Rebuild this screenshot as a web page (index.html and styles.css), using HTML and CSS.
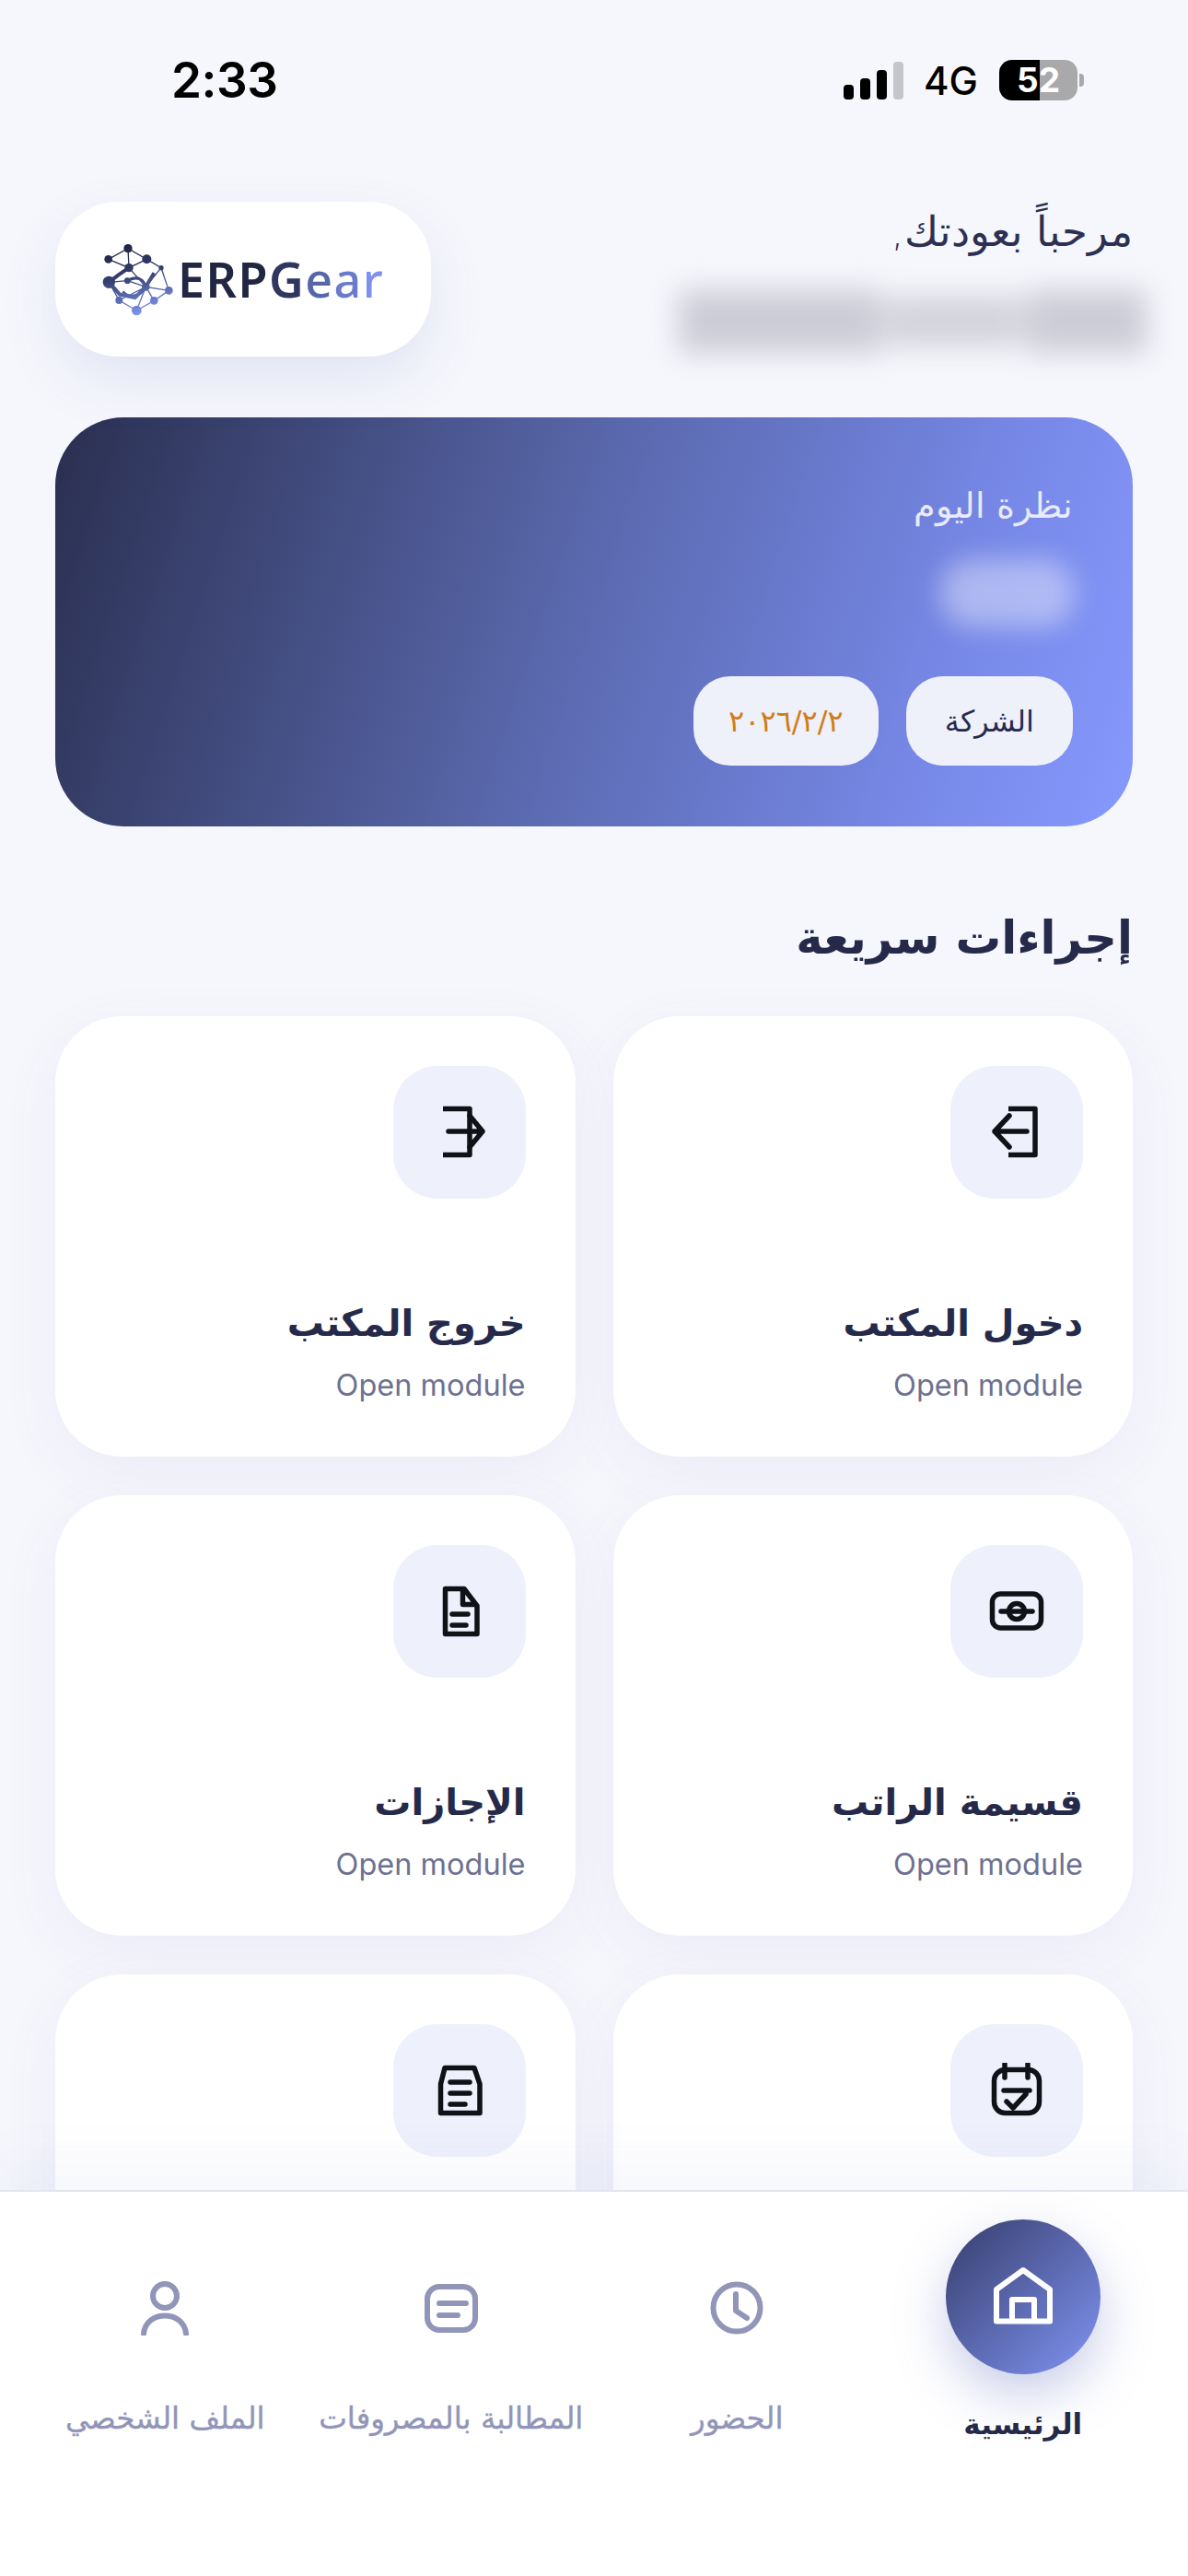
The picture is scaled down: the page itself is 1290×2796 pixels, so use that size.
FILE: index.html
```html
<!DOCTYPE html>
<html lang="ar" dir="rtl">
<head>
<meta charset="utf-8">
<title>ERPGear</title>
<link rel="stylesheet" href="styles.css">
</head>
<body>
<div class="screen">
  <div class="status" dir="ltr">
    <span class="time">2:33</span>
    <div class="status-right">
      <div class="signal"><i class="b1"></i><i class="b2"></i><i class="b3"></i><i class="b4"></i></div>
      <span class="net">4G</span>
      <div class="battery"><span class="batt-body">52</span><i class="batt-nub"></i></div>
    </div>
  </div>

  <header class="header">
    <div class="greet">
      <p class="hello">مرحباً بعودتك,</p>
      <div class="name-blur"><i></i><i></i><i></i></div>
    </div>
    <div class="logo" dir="ltr">
      <svg class="logo-mark" viewBox="180 65 240 240" aria-hidden="true">
        <defs>
          <linearGradient id="lg" gradientUnits="userSpaceOnUse" x1="250" y1="70" x2="310" y2="300">
            <stop offset="0" stop-color="#1f2340"/><stop offset=".45" stop-color="#35406f"/><stop offset="1" stop-color="#7f95f0"/>
          </linearGradient>
        </defs>
        <g fill="none" stroke="url(#lg)" stroke-width="4">
          <path d="M203 120L267 85L328 120L270 148L203 120M267 85L270 148M328 120L375 148L400 222L325 210L270 148M375 148L325 210M205 195L270 148M205 195L238 254L295 287L352 255L400 222M238 254L325 210L352 255L295 287L325 210M265 190L325 210M205 195L265 190"/>
          <path stroke-width="12" d="M270 148L235 172L205 195L240 235L290 245L325 210L352 165"/>
          <path stroke-width="9" d="M265 190C300 170 320 190 325 210M250 225C270 250 310 240 325 210"/>
        </g>
        <g fill="url(#lg)">
          <circle cx="267" cy="85" r="14"/><circle cx="203" cy="120" r="13"/><circle cx="328" cy="120" r="15"/>
          <circle cx="270" cy="148" r="14"/><circle cx="375" cy="148" r="8"/><circle cx="205" cy="195" r="20"/>
          <circle cx="265" cy="190" r="10"/><circle cx="325" cy="210" r="13"/><circle cx="400" cy="222" r="13"/>
          <circle cx="238" cy="254" r="12"/><circle cx="352" cy="255" r="13"/><circle cx="295" cy="287" r="16"/>
        </g>
      </svg>
      <span class="logo-text"><b class="c1">ERP</b><b class="c2">G</b><b class="c3">e</b><b class="c4">a</b><b class="c5">r</b></span>
    </div>
  </header>

  <section class="hero">
    <p class="hero-title">نظرة اليوم</p>
    <div class="hero-blur"></div>
    <div class="chips">
      <span class="chip">الشركة</span>
      <span class="chip chip-date">٢٠٢٦/٢/٢</span>
    </div>
  </section>

  <h2 class="section-title">إجراءات سريعة</h2>

  <div class="grid">
    <article class="card">
      <div class="icon-box"><svg class="ic" viewBox="0 0 60 60"><path d="M21 4.500H50V54.500H21"/><path class="rd" d="M41 29H6M22 12L6 29L22 46"/></svg></div>
      <h3 class="card-title">دخول المكتب</h3>
      <p class="card-sub">Open module</p>
    </article>
    <article class="card">
      <div class="icon-box"><svg class="ic" viewBox="0 0 60 60"><path d="M12 4.500H41V54.500H12"/><path class="rd" d="M18 29H55M41 12L55 29L41 46"/></svg></div>
      <h3 class="card-title">خروج المكتب</h3>
      <p class="card-sub">Open module</p>
    </article>
    <article class="card">
      <div class="icon-box"><svg class="ic" viewBox="0 0 60 60"><rect x="3.500" y="11" width="53" height="37" rx="9"/><path class="rd" d="M13 30H47"/><circle cx="30" cy="30" r="8.500"/></svg></div>
      <h3 class="card-title">قسيمة الراتب</h3>
      <p class="card-sub">Open module</p>
    </article>
    <article class="card">
      <div class="icon-box"><svg class="ic" viewBox="0 0 60 60"><path d="M14.500 5.500H35L49 24V54.500H14.500ZM33.500 6V22.500H48"/><path class="rd" d="M22 33H39M22 45H37"/></svg></div>
      <h3 class="card-title">الإجازات</h3>
      <p class="card-sub">Open module</p>
    </article>
    <article class="card">
      <div class="icon-box"><svg class="ic" viewBox="0 0 60 60"><rect x="5.500" y="7.500" width="49" height="47" rx="12"/><path class="rd" d="M17 1V16M42 1V16M16 30H44M19 42L26 49L40 34"/></svg></div>
    </article>
    <article class="card">
      <div class="icon-box"><svg class="ic" viewBox="0 0 60 60"><path d="M14 5.500H46L52 23V54.500H9.500V23Z"/><path class="rd" d="M20 21H41M20 33H41M20 45H36"/></svg></div>
    </article>
  </div>

  <nav class="nav">
    <div class="nav-item active">
      <div class="nav-home"><svg class="home-ic" viewBox="0 0 66 66"><path d="M4 59.500V25L33 4L62 25V59.500ZM21 59V36H45V59"/></svg></div>
      <span class="nav-label">الرئيسية</span>
    </div>
    <div class="nav-item">
      <svg class="nav-ic" viewBox="0 0 60 60"><circle cx="30" cy="30" r="25.500"/><path d="M29 15V33L41 41"/></svg>
      <span class="nav-label">الحضور</span>
    </div>
    <div class="nav-item">
      <svg class="nav-ic" viewBox="0 0 60 60"><rect x="4" y="7" width="52" height="47" rx="13"/><path d="M17 25H46M17 38H37"/></svg>
      <span class="nav-label">المطالبة بالمصروفات</span>
    </div>
    <div class="nav-item">
      <svg class="nav-ic" viewBox="0 0 60 60"><circle cx="30" cy="17" r="13"/><path d="M7 58C9 32 51 32 53 58"/></svg>
      <span class="nav-label">الملف الشخصي</span>
    </div>
  </nav>
</div>
</body>
</html>
```
FILE: styles.css
```css
* { box-sizing: border-box; }
html, body { margin: 0; padding: 0; }
body { background: #f6f7fc; font-family: "DejaVu Sans", "Noto Sans", sans-serif; color: #262a4a; }
p, h2, h3 { margin: 0; }

.screen { position: relative; width: 1290px; height: 2796px; overflow: hidden; background: #f6f7fc; }

.status { height: 219px; padding: 62px 113px 0 186px; display: flex; justify-content: space-between; align-items: flex-start; font-family: Inter, sans-serif; color: #000; }
.time { font-size: 53px; font-weight: 600; line-height: 50px; letter-spacing: -.5px; }
.status-right { display: flex; align-items: center; height: 46px; margin-top: 2px; }
.signal { display: flex; align-items: flex-end; gap: 7px; height: 41px; margin-top: 0; }
.signal i { display: block; width: 11px; border-radius: 4px; background: #000; }
.signal .b1 { height: 16px; }
.signal .b2 { height: 23px; }
.signal .b3 { height: 32px; }
.signal .b4 { height: 41px; background: #c4c5c9; }
.net { font-size: 42px; font-weight: 500; margin: 2px 23px 0 22px; line-height: 46px; }
.battery { display: flex; align-items: center; gap: 2px; }
.batt-body { width: 85px; height: 44px; border-radius: 14px; background: linear-gradient(90deg, #000 52%, #a9a9ab 52%); color: #fff; font-size: 37px; font-weight: 700; line-height: 44px; text-align: center; }
.batt-nub { display: block; width: 5px; height: 14px; background: #a9a9ab; border-radius: 0 4px 4px 0; }

.header { height: 168px; padding: 0 60px; display: flex; justify-content: space-between; align-items: flex-start; }
.hello { font-size: 45px; line-height: 60px; margin-top: 3px; color: #2c3052; font-weight: 300; }
.greet { display: flex; flex-direction: column; align-items: flex-start; }
.name-blur { display: flex; gap: 4px; width: 530px; height: 90px; margin: 22px -15px 0 0; align-items: center; filter: blur(15px); }
.name-blur i { display: block; height: 68px; background: #cbccd6; }
.name-blur i:nth-child(1) { width: 130px; }
.name-blur i:nth-child(2) { width: 150px; height: 54px; background: #d2d3db; }
.name-blur i:nth-child(3) { width: 220px; }

.logo { width: 408px; height: 168px; background: #fff; border-radius: 68px; display: flex; align-items: center; padding-left: 50px; gap: 3px; box-shadow: 0 26px 60px rgba(96, 108, 190, .13); }
.logo-mark { width: 80px; height: 80px; flex: none; }
.logo-text { font-family: "Noto Sans", sans-serif; font-size: 52px; letter-spacing: 1.500px; line-height: 60px; }
.logo-text b { font-weight: 600; }
.logo-text .c3, .logo-text .c4, .logo-text .c5 { font-weight: 500; }
.c1 { color: #222642; }
.c2 { color: #2f3660; }
.c3 { color: #5666ab; }
.c4 { color: #6a7bcb; }
.c5 { color: #7e91ec; }

.hero { margin: 66px 60px 0; height: 444px; border-radius: 74px; background: linear-gradient(108deg, #2a2f50 0%, #5a69ae 48%, #7687e6 80%, #8699fd 100%); padding: 66px 65px; display: flex; flex-direction: column; align-items: flex-start; }
.hero-title { font-size: 38px; line-height: 60px; color: #e9ebfb; font-weight: 300; }
.hero-blur { width: 146px; height: 74px; margin: 28px -2px 0 0; background: rgba(255, 255, 255, .4); border-radius: 34px; filter: blur(14px); }
.chips { display: flex; gap: 30px; margin-top: 53px; }
.chip { height: 97px; padding: 0 42px; border-radius: 40px; background: #eef0fa; display: flex; align-items: center; font-size: 32px; font-weight: 500; color: #262a4a; }
.chip-date { color: #d17c17; padding: 0 38px; }

.section-title { font-size: 49.500px; font-weight: 600; line-height: 80px; margin: 81px 60px 0; text-align: right; color: #262a4a; }

.grid { display: grid; grid-template-columns: 1fr 1fr; gap: 42px 41px; margin: 45px 60px 0; }
.card { height: 478px; background: #fff; border-radius: 72px; padding: 54px 54px 0; box-shadow: 0 18px 60px rgba(96, 108, 190, .08); display: flex; flex-direction: column; align-items: flex-start; }
.icon-box { width: 144px; height: 144px; border-radius: 48px; background: #eef0fc; display: flex; align-items: center; justify-content: center; }
.ic { width: 60px; height: 60px; fill: none; stroke: #111218; stroke-width: 5.500; stroke-linejoin: round; stroke-linecap: butt; }
.ic .rd { stroke-linecap: round; }
.card-title { font-size: 40px; font-weight: 600; line-height: 60px; margin-top: 105px; color: #262a4a; }
.card-sub { font-family: Inter, sans-serif; font-size: 32.500px; line-height: 40px; margin-top: 18px; color: #6d7191; }

.nav { position: absolute; left: 0; right: 0; bottom: 0; height: 419px; padding: 0 24px; background: #fff; border-top: 2px solid #e4e5ef; box-shadow: 0 -34px 50px rgba(96, 108, 190, .05); display: grid; grid-template-columns: repeat(4, 1fr); }
.nav-item { display: flex; flex-direction: column; align-items: center; padding-top: 96px; }
.nav-ic { width: 60px; height: 60px; fill: none; stroke: #9195b8; stroke-width: 6; stroke-linecap: round; stroke-linejoin: round; }
.nav-label { font-size: 32.500px; line-height: 48px; margin-top: 66px; color: #9195b8; white-space: nowrap; -webkit-text-stroke: .4px currentColor; }
.nav-item.active { padding-top: 30px; }
.nav-home { width: 168px; height: 168px; border-radius: 50%; background: linear-gradient(135deg, #363d6b 0%, #8094f3 100%); box-shadow: 0 22px 56px rgba(96, 108, 190, .34); display: flex; align-items: center; justify-content: center; }
.home-ic { width: 66px; height: 66px; fill: none; stroke: #fff; stroke-width: 6; stroke-linejoin: round; }
.active .nav-label { color: #262a4a; margin-top: 30px; font-size: 31px; font-weight: 600; -webkit-text-stroke: 0; }
```
